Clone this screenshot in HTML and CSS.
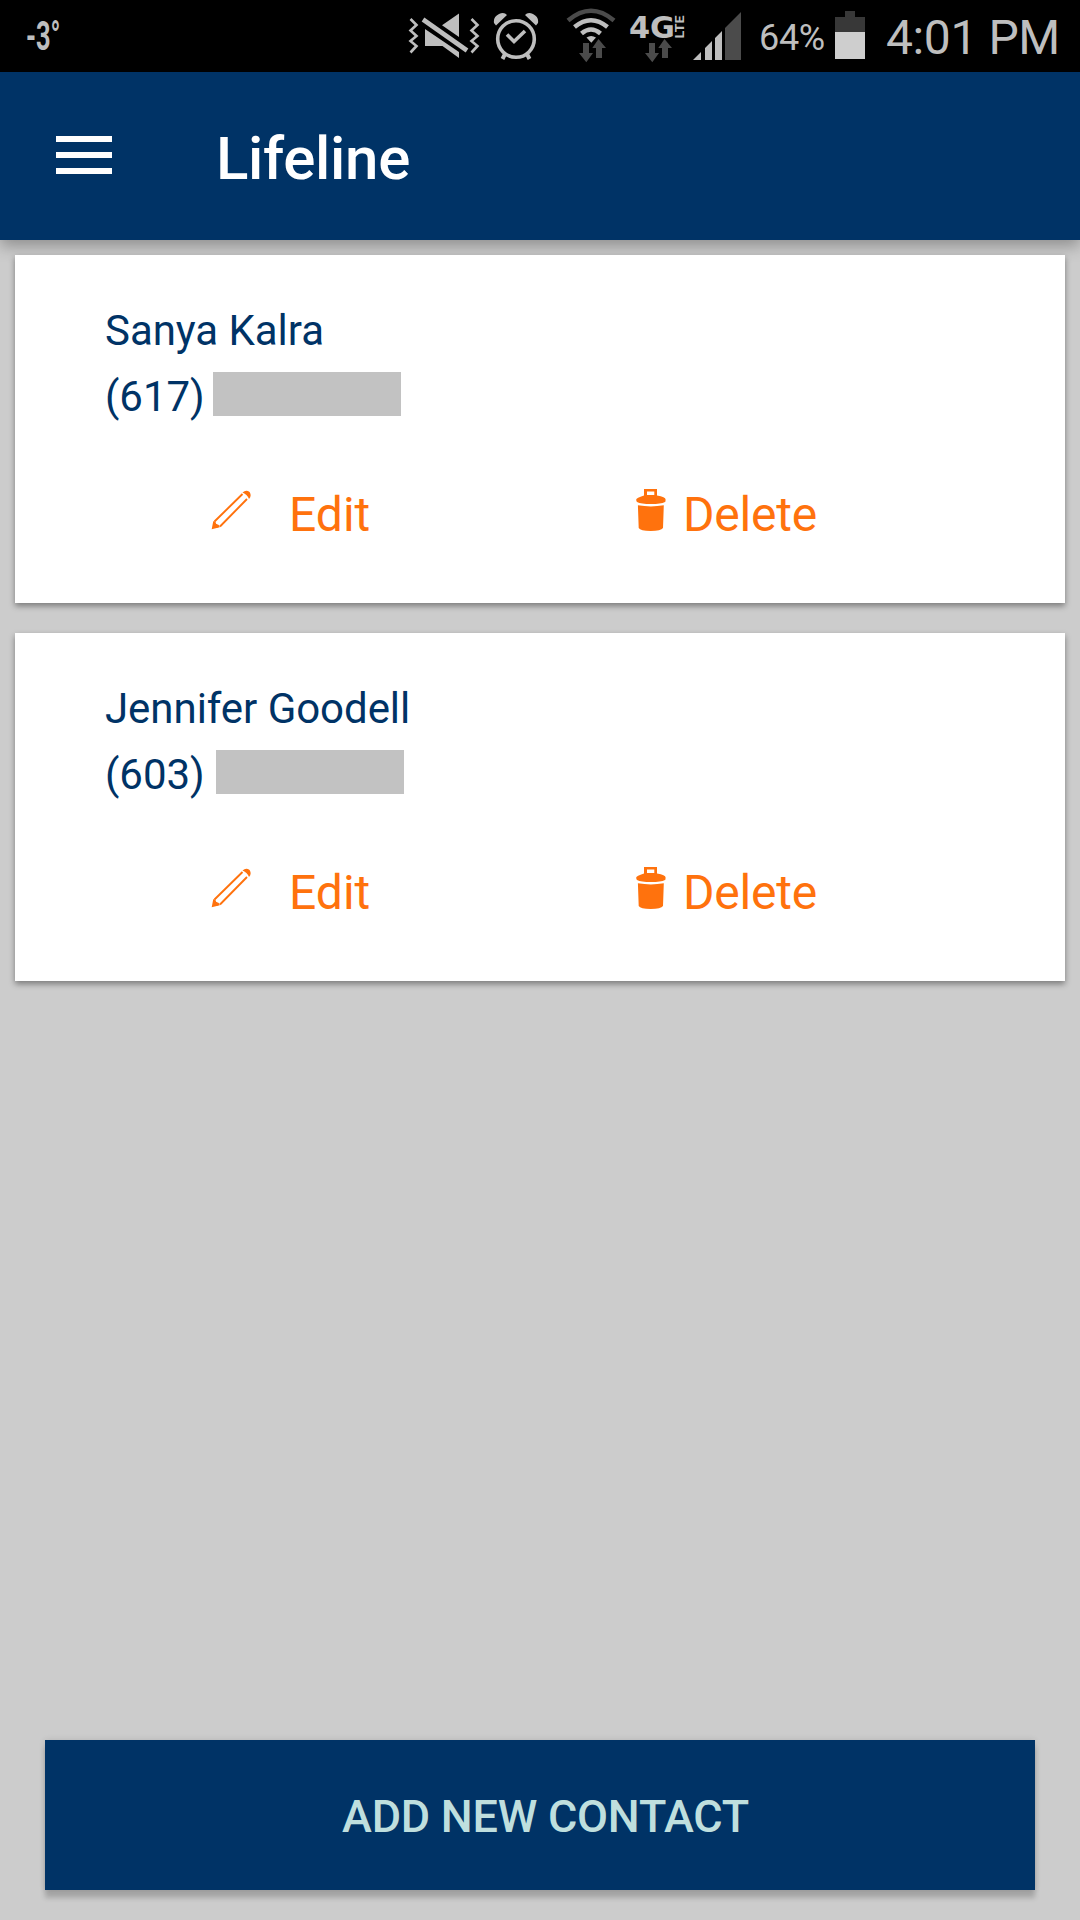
FILE: index.html
```html
<!DOCTYPE html>
<html lang="en">
<head>
<meta charset="utf-8">
<title>Lifeline</title>
<link rel="stylesheet" href="styles.css">
</head>
<body>
<svg class="sprite" aria-hidden="true">
  <symbol id="pencil" viewBox="0 0 40 40">
    <path d="M31.5 4 3.500 31.5 M36 9 9 36.500" fill="none" stroke="currentColor" stroke-width="1.9"/>
    <path d="M.7 39.3 2.3 31 8.8 37.3Z M31.500 2.500Q35 -.5 38.6 2 41 6 38 9Q36.5 4.600 31.500 2.500Z" fill="currentColor"/>
    <path d="M3 31q2 .5 2 3 2.8 0 4 2.5L5 38 2 35Z" fill="currentColor"/>
  </symbol>
  <symbol id="trash" viewBox="0 0 30 42">
    <path fill-rule="evenodd" fill="currentColor" d="M8 0H21V6.5Q29.6 8 29.6 10.5T29 13Q25 15 15 15T1 13Q.2 12 .2 10.5T8 6.5ZM11 2.5V6H18.3V2.5Z"/>
    <path fill="currentColor" d="M1.9 16.3Q15 18.6 27.8 16.3L27 39Q25 42 14.7 42T2.7 39Z"/>
  </symbol>
</svg>
<div class="status">
  <span class="temp">-3°</span>
  <div class="status-right">
    <svg width="85" height="72" viewBox="400 0 85 72">
      <g fill="none" stroke="#bebebe" stroke-width="2.6">
        <path d="M410.500 19 416.500 25 410.500 30.500 416.500 36 410.500 41 416.500 46 410.500 52.500"/>
        <path d="M471.500 19 477.500 25 471.500 30.500 477.500 36 471.500 41 477.500 46 471.500 52.500"/>
      </g>
      <path fill="#bebebe" d="M459 13.500V37L442 25.300ZM425 29L459 52V58L442.500 46H425Z"/>
      <path d="M423 19.500 467 50.500" stroke="#000" stroke-width="9"/>
      <path d="M423 19.500 467 50.500" stroke="#bebebe" stroke-width="4.600"/>
    </svg>
    <svg width="65" height="72" viewBox="485 0 65 72">
      <g fill="none" stroke="#bebebe">
        <circle cx="516" cy="39" r="18.300" stroke-width="3.600"/>
        <path d="M507 34.500 514 41.500 525 31" stroke-width="3.600"/>
        <path d="M505 54l-2.500 5M527 54l2.500 5" stroke-width="4"/>
      </g>
      <path fill="#bebebe" d="M494 23Q493 17 499 14 504 11.500 507 15L496 25.500ZM538 23Q539 17 533 14 528 11.500 525 15L536 25.500Z"/>
    </svg>
    <svg width="70" height="72" viewBox="550 0 70 72">
      <g fill="none" stroke-width="4.500">
        <path d="M568 20.500Q591 1 614 20.500" stroke="#4b4b4b"/>
        <path d="M574.500 27Q591 13.500 607.500 27M581.500 33.500Q591 25.500 600.500 33.500" stroke="#bebebe"/>
      </g>
      <path fill="#bebebe" d="M586.500 37.500Q591 34.500 596 37.500L591.300 42.700Z"/>
      <path fill="#4b4b4b" d="M583 43H589V53H593L586.300 62.300 579 53H583ZM596 58V48H592.300L598.500 39 606 48H602V58Z"/>
    </svg>
    <svg width="70" height="72" viewBox="620 0 70 72">
      <text class="network" x="629" y="38" textLength="46" lengthAdjust="spacingAndGlyphs">4G</text>
      <text class="lte" transform="translate(684 38.500) rotate(-90)" textLength="23" lengthAdjust="spacingAndGlyphs">LTE</text>
      <path fill="#4b4b4b" d="M649 43H655V53H659L652.300 62.300 645 53H649ZM662 58V48H658.300L664.500 39 672 48H668V58Z"/>
    </svg>
    <svg width="55" height="72" viewBox="690 0 55 72">
      <path fill="#bebebe" d="M693 60 701 52V60ZM705 60V48L712 41V60ZM715 60V38L722 31V60Z"/>
      <path fill="#4b4b4b" d="M725 60V28L741 12V60Z"/>
    </svg>
    <span class="percent">64%</span>
    <svg width="50" height="72" viewBox="825 0 50 72">
      <path fill="#383838" d="M845 11H855V17H865V32H835V17H845Z"/>
      <path fill="#cecece" d="M835 32H865V59H835Z"/>
    </svg>
    <span class="clock">4:01 PM</span>
  </div>
</div>
<header class="appbar">
  <div class="menu"><i></i><i></i><i></i></div>
  <h1>Lifeline</h1>
</header>
<main>
  <section class="card">
    <p>Sanya Kalra</p>
    <p class="phone">(617)<span class="mask"></span></p>
    <div class="actions">
      <a class="edit"><svg class="ic-pencil"><use href="#pencil"/></svg>Edit</a>
      <a class="delete"><svg class="ic-trash"><use href="#trash"/></svg>Delete</a>
    </div>
  </section>
  <section class="card">
    <p>Jennifer Goodell</p>
    <p class="phone wide">(603)<span class="mask"></span></p>
    <div class="actions">
      <a class="edit"><svg class="ic-pencil"><use href="#pencil"/></svg>Edit</a>
      <a class="delete"><svg class="ic-trash"><use href="#trash"/></svg>Delete</a>
    </div>
  </section>
</main>
<button class="add">ADD NEW CONTACT</button>
</body>
</html>
```
FILE: styles.css
```css
* { box-sizing: border-box; }
body {
  margin: 0;
  width: 1080px;
  height: 1920px;
  overflow: hidden;
  display: flex;
  flex-direction: column;
  background: #ccc;
  font-family: Roboto, sans-serif;
}
.sprite { display: none; }
svg { display: block; flex: none; }

.status {
  height: 72px;
  flex: none;
  display: flex;
  justify-content: space-between;
  background: #000;
  color: #bebebe;
  line-height: 72px;
  white-space: nowrap;
}
.temp {
  margin-left: 26px;
  font-size: 41px;
  font-weight: 700;
  transform: scaleX(.62);
  transform-origin: left;
}
.status-right { display: flex; width: 680px; }
.network { font: 700 30px "DejaVu Sans", sans-serif; fill: #bebebe; }
.lte { font-size: 13px; font-weight: 700; fill: #bebebe; }
.percent { width: 80px; padding-left: 14px; font-size: 36px; line-height: 76px; letter-spacing: -.3px; }
.clock { padding-left: 11px; font-size: 48px; line-height: 75px; letter-spacing: -.4px; }

.appbar {
  height: 168px;
  flex: none;
  display: flex;
  align-items: center;
  padding: 0 56px;
  background: #036;
  box-shadow: 0 6px 15px rgba(0, 0, 0, .3);
  color: #fff;
}
.menu { width: 56px; display: grid; gap: 10px; margin-top: -2px; }
.menu i { height: 6px; background: #fff; }
h1 { margin: 6px 0 0 104px; font-size: 60px; font-weight: 500; line-height: 72px; letter-spacing: -.3px; }

main { flex: 1; display: grid; align-content: start; gap: 30px; padding: 15px; }
.card {
  height: 348px;
  padding: 43px 90px 0;
  background: #fff;
  box-shadow: 0 3px 6px rgba(0, 0, 0, .4);
  color: #036;
}
.card p { margin: 0; height: 66px; font-size: 42px; line-height: 66px; letter-spacing: -.05px; }
.phone { display: flex; }
.mask { width: 188px; height: 44px; margin: 8px 0 0 8px; background: #c2c2c2; }
.wide .mask { margin-left: 11px; }
.actions {
  display: flex;
  margin-top: 55px;
  color: #ff720d;
  font-size: 48px;
  line-height: 60px;
}
.actions a { display: flex; }
.edit { width: 424px; padding-left: 106px; }
.delete { padding-left: 107px; letter-spacing: -.2px; }
.ic-pencil { width: 40px; height: 40px; margin: 5px 38px 0 0; }
.ic-trash { width: 30px; height: 42px; margin: 4px 17px 0 0; }

.add {
  width: 990px;
  height: 150px;
  flex: none;
  margin: 0 45px 30px;
  padding: 3px 0 0 11px;
  border: 0;
  background: #036;
  box-shadow: 0 8px 5px rgba(0, 0, 0, .18), 0 0 6px rgba(0, 0, 0, .12);
  color: #bfdfde;
  font: 500 45px/54px Roboto, sans-serif;
  letter-spacing: -.25px;
}
```
